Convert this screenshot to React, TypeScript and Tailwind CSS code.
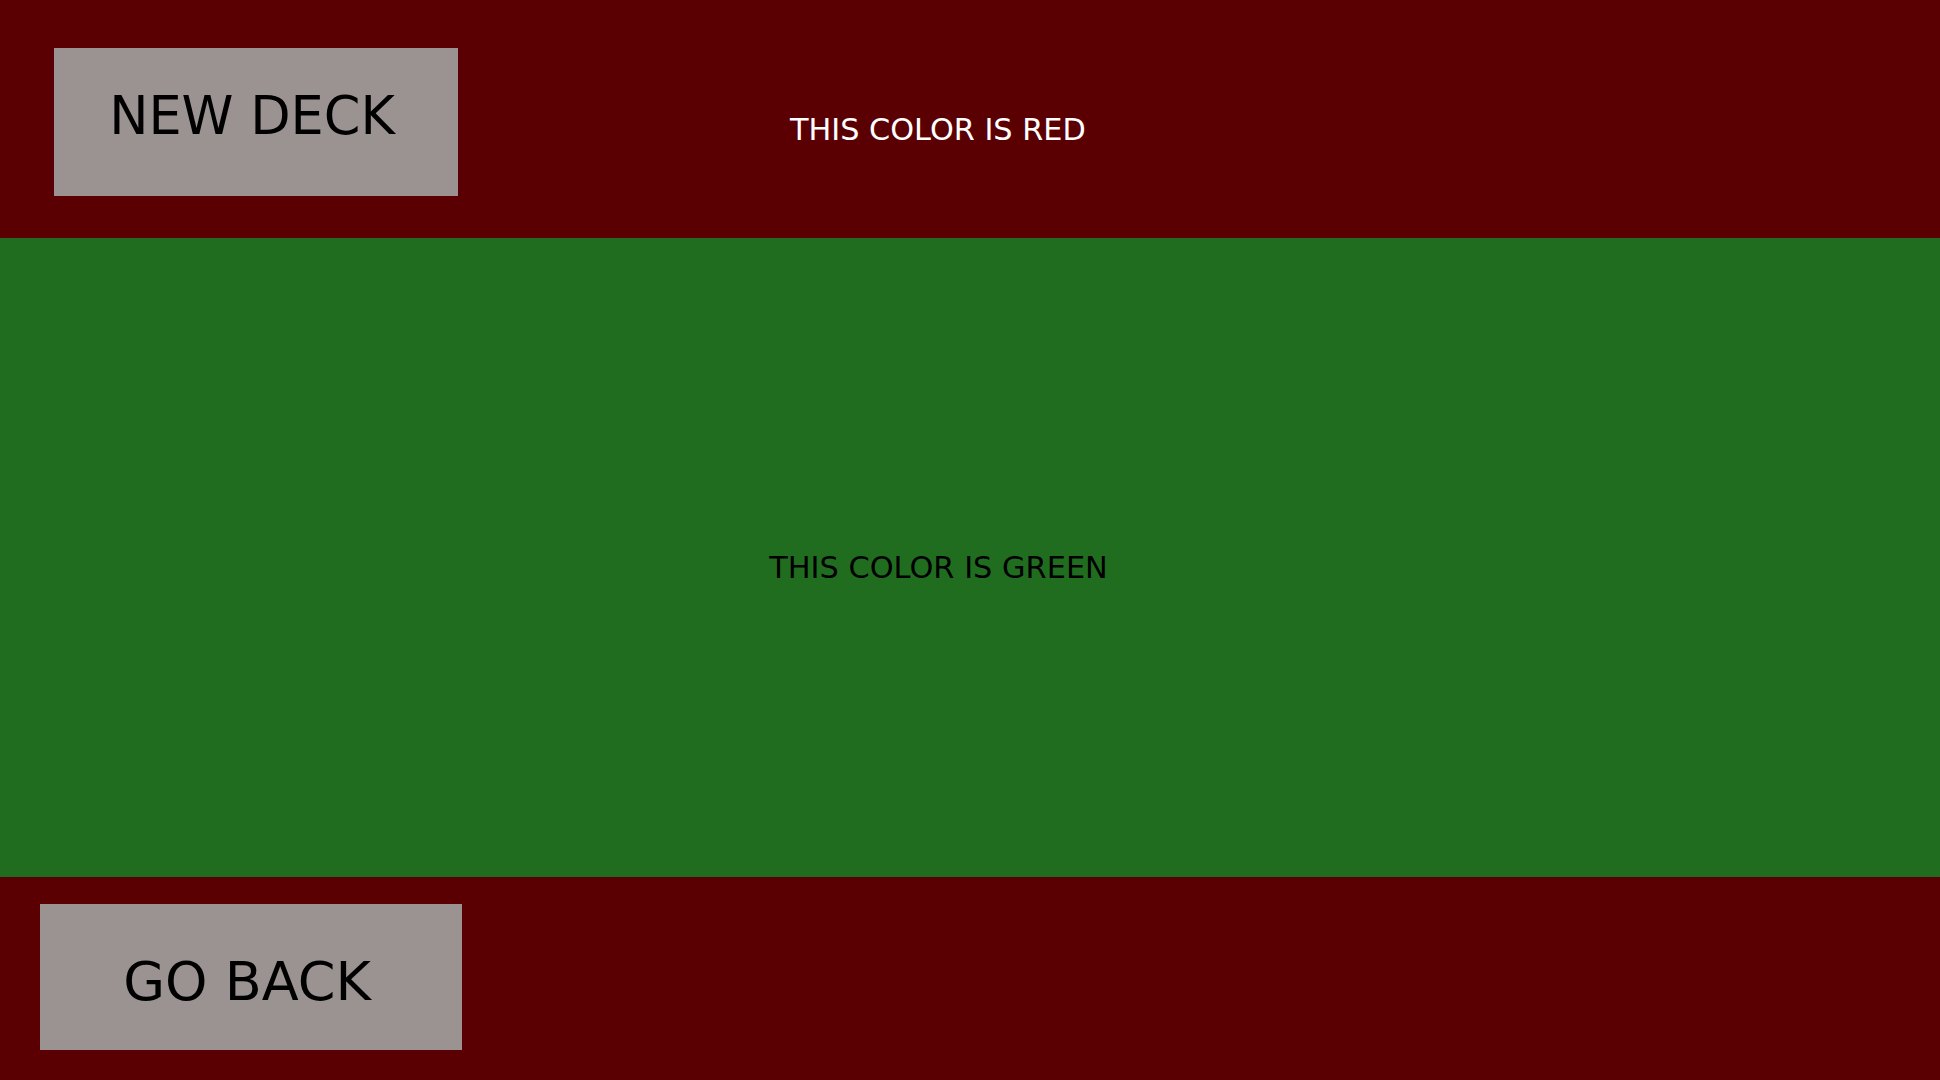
// Color deck screen: red header/footer bands around a green field

const font = { fontFamily: '"DejaVu Sans", sans-serif' };

function DeckButton({ label, className }: { label: string; className: string }) {
    return (
        <button
            type="button"
            className={`flex justify-center bg-[#9b9391] text-black leading-none ${className}`}
        >
            {label}
        </button>
    );
}

export default function App() {
    return (
        <div className="flex flex-col h-screen w-full" style={font}>
            {/* Header */}
            <div className="flex items-start h-[238px] bg-[#5b0002]">
                <DeckButton
                    label="NEW DECK"
                    className="ml-[54px] mt-[48px] w-[404px] h-[148px] pt-[42px] pr-[8px] text-[52.5px]"
                />
                <span className="ml-[332px] mt-[115px] text-[30.3px] leading-none text-white">
                    THIS COLOR IS RED
                </span>
            </div>

            {/* Table */}
            <div className="flex-1 flex items-center justify-center bg-[#206d20] pr-[63px]">
                <span className="mt-[21px] text-[30.4px] leading-none text-black">
                    THIS COLOR IS GREEN
                </span>
            </div>

            {/* Footer */}
            <div className="flex items-start h-[203px] bg-[#5b0002]">
                <DeckButton
                    label="GO BACK"
                    className="ml-[40px] mt-[27px] w-[422px] h-[146px] pt-[51px] pr-[8px] text-[54px]"
                />
            </div>
        </div>
    );
}
